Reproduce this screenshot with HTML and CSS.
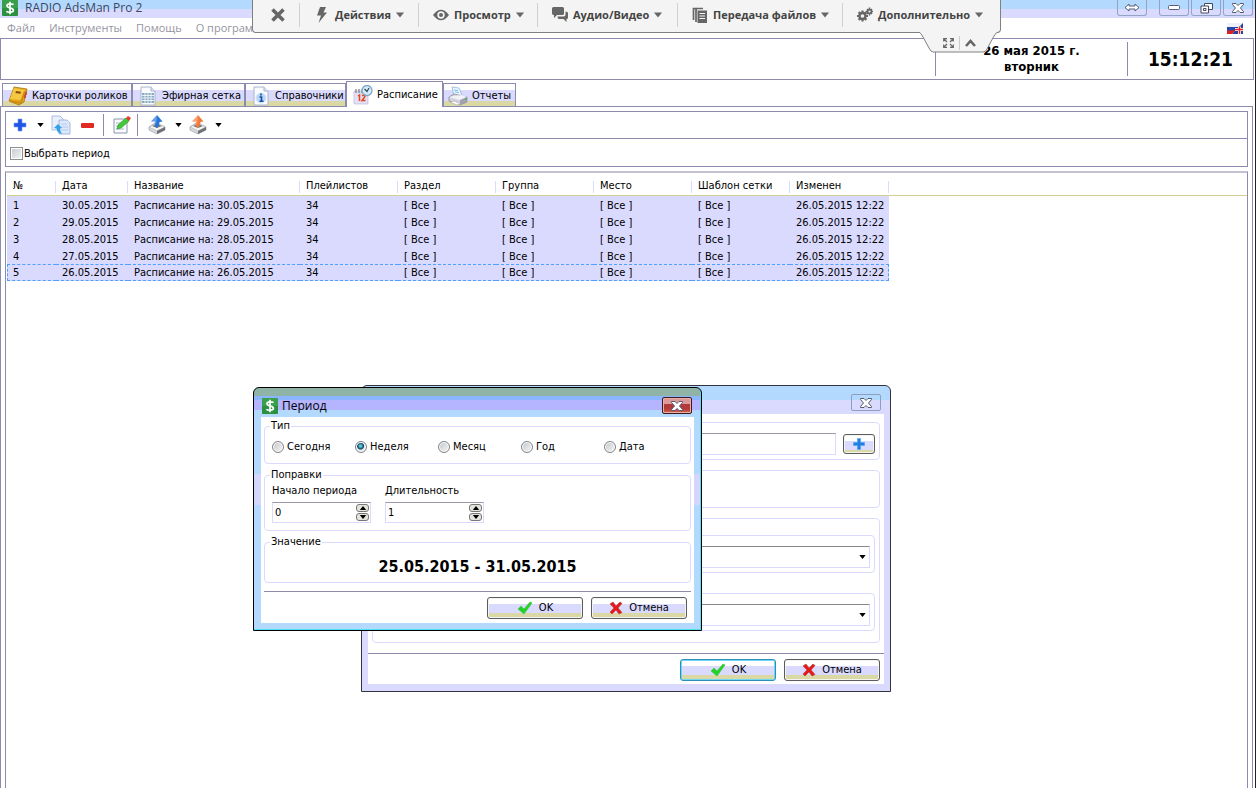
FILE: index.html
```html
<!DOCTYPE html>
<html lang="ru">
<head>
<meta charset="utf-8">
<title>RADIO AdsMan Pro 2</title>
<link rel="stylesheet" href="styles.css">
</head>
<body>
<svg class="defs" aria-hidden="true">
  <symbol id="logo" viewBox="0 0 16 16"><rect width="16" height="16" rx="1" fill="#2b9140"/><rect width="16" height="8" fill="#43a956" opacity=".6"/><path d="M11.500 4.600C10.600 3.700 5 3 5 5.700S11.400 7.700 11.400 10.200 5.600 12.700 4.400 11.200M8 1.800V14.200" fill="none" stroke="#fff" stroke-width="1.700"/></symbol>
  <symbol id="down" viewBox="0 0 8 5"><path d="M0 0h8L4 5z" fill="currentColor"/></symbol>
  <symbol id="cross" viewBox="0 0 14 10"><path d="M1.500 .5h3.500L7 2.500 9 .5h3.500v1L9.500 5l3 3.500v1H9L7 7.500 5 9.500H1.500v-1L4.500 5l-3-3.500z" fill="#fff" stroke="#555a70"/></symbol>
  <symbol id="ok" viewBox="0 0 16 14"><path d="M1 8l3-3 3 3 6-7 2 1-8 11z" fill="#1fd422" stroke="#4fc052" stroke-width=".7"/></symbol>
  <symbol id="no" viewBox="0 0 14 14"><path d="M1 3l3-2 3 4 4-4 2 1.500L9 7l4 4.500L10 13 7 9l-4 4-2-2 4-4z" fill="#e81818" stroke="#b84840" stroke-width=".7"/></symbol>
  <symbol id="plus" viewBox="0 0 14 14"><path d="M5.500 1.500h3v4h4v3h-4v4h-3v-4h-4v-3h4z" fill="#1e7fe0" stroke="#4aa3f0" stroke-width=".6"/></symbol>
  <symbol id="tray" viewBox="0 0 20 20"><path d="M2 12l6-4 10 4v3l-8 4-8-4z" fill="#d8dade" stroke="#9a9ea6" stroke-width=".7"/><path d="M2 12l8 4 8-4-8-4z" fill="#f3f3f0" stroke="#aaa" stroke-width=".6"/><path d="M10 16v3l8-4v-3z" fill="#6d7076"/><path d="M5 11l5 2 5-2-5-2z" fill="#777"/><path d="M10 0l5.500 6.500-3 .5Q13 10 10 13q-3-1.500-2-6.500L4 6.500z" fill="currentColor"/><path d="M10 0L9.500 7l-1.500 3V6.500H4z" fill="#fff" opacity=".3"/></symbol>
</svg>

<header class="titlebar">
  <svg class="i16"><use href="#logo"/></svg>
  <h1>RADIO AdsMan Pro 2</h1>
  <div class="winbtns">
    <button class="wide" aria-label="Переключить"><svg width="16" height="9" viewBox="0 0 16 9"><path d="M1 4.500L5 1v2h6V1l4 3.500L11 8V6H5v2z" fill="#fff" stroke="#5a5f78"/></svg></button>
    <button aria-label="Свернуть"><svg width="12" height="5" viewBox="0 0 12 5"><rect x=".5" y=".5" width="11" height="4" rx="1" fill="#fff" stroke="#5a5f78"/></svg></button>
    <button aria-label="Восстановить"><svg width="13" height="12" viewBox="0 0 13 12"><path d="M4.500 1.500h8v6h-8z" fill="#fff" stroke="#444a62"/><path d="M1 4h7.500v7H1z" fill="#fff" stroke="#444a62"/><path d="M3.500 6.500h2.500v2H3.500z" fill="#fff" stroke="#444a62"/></svg></button>
    <button aria-label="Закрыть"><svg width="14" height="10"><use href="#cross"/></svg></button>
  </div>
</header>

<nav class="menubar">
  <button>Файл</button><button>Инструменты</button><button>Помощь</button><button>О программе</button>
  <svg class="flag" width="16" height="11" viewBox="0 0 16 11"><path d="M0 0h16L5 11H0z" fill="#eef0fa"/><path d="M0 4h12L8 8H0z" fill="#2748a8"/><path d="M0 7.500h9L5 11H0z" fill="#e02020"/><path d="M16 0v11H5z" fill="#29449c"/><path d="M12.500 3.500v7.500M8 6.500h8" stroke="#fff" stroke-width="3"/><path d="M12.500 3.500v7.500M8 6.500h8" stroke="#e22" stroke-width="1.500"/></svg>
</nav>

<section class="clockbar">
  <p class="date">26 мая 2015 г.<br>вторник</p>
  <p class="time">15:12:21</p>
</section>

<nav class="tabs" role="tablist">
  <button role="tab" class="t1"><svg class="i20" viewBox="0 0 20 20"><path d="M6 1l13 2-3 13-5 3L1 15z" fill="#e6a817" stroke="#a87410" stroke-width=".8"/><path d="M6 2l11 2-3 10-12-1z" fill="#f5c842"/><path d="M1 14l11 2 4-11 2 .5-5 12.500-11-2z" fill="#c98b12"/><path d="M8 5l5 .8-.6 2L7.400 7z" fill="#8c4a12"/><path d="M18 6v3M17 9v3" stroke="#c33" stroke-width="1.500"/></svg>Карточки роликов</button>
  <button role="tab" class="t2"><svg class="i20" viewBox="0 0 20 20"><path d="M3 1h10l4 4v14H3z" fill="#fafbff" stroke="#a9b4cc"/><path d="M13 1v4h4" fill="#dfe8f8" stroke="#a9b4cc"/><path d="M4 7h12v10H4z" fill="#86abc4"/><path d="M4 9.500h12M4 12h12M4 14.500h12M7 7v10M10 7v10M13 7v10" stroke="#fff" stroke-width=".8"/></svg>Эфирная сетка</button>
  <button role="tab" class="t3"><svg class="i20" viewBox="0 0 20 20"><path d="M3 1h10l4 4v14H3z" fill="#fafbff" stroke="#a9b4cc"/><path d="M13 1v4h4" fill="#dfe8f8" stroke="#a9b4cc"/><circle cx="10" cy="12" r="5" fill="#b7d8f6" stroke="#d7e7f8"/><path d="M10 7.500v2M8.500 11H10.500v4M8.500 15.300h4" stroke="#184ea8" stroke-width="1.600" fill="none"/></svg>Справочники</button>
  <button role="tab" class="t4 on" aria-selected="true"><svg class="i20" viewBox="0 0 20 20"><path d="M1 6h14v13H1z" fill="#e3dff5" stroke="#c0bcdc" stroke-width=".7"/><path d="M3 4v4M6 4v4M9 4v4" stroke="#667" stroke-width="1"/><path d="M5 11l1.500-1v6M9 11q3-2 3 .5L9 15.500h3.500" stroke="#e8481c" stroke-width="1.500" fill="none"/><circle cx="14" cy="5.500" r="5" fill="#d5ecfa" stroke="#7fa8c8" stroke-width="1.300"/><path d="M11.500 4l2.500 2.500L16 3" fill="none" stroke="#345" stroke-width="1.200"/></svg>Расписание</button>
  <button role="tab" class="t5"><svg class="i20" viewBox="0 0 20 20"><path d="M4 1l7 1 3 7-8 1z" fill="#eef7ff" stroke="#8db4d8" stroke-width=".8"/><path d="M6 4l4 .5M7 6l4 .5" stroke="#78bde8"/><path d="M1 11l5-3 13 3v5l-7 3-11-4z" fill="#d5d2e0" stroke="#888794" stroke-width=".8"/><path d="M1 11l11 3 7-3-5-2-7 .8z" fill="#f3f2f8"/><path d="M12 14v5l7-3v-5z" fill="#a3a1b0"/><path d="M2 16l7 3 4-1-7-3z" fill="#fff" stroke="#999" stroke-width=".5"/><path d="M17 13h1.500" stroke="#3b3" stroke-width="1.500"/></svg>Отчеты</button>
</nav>

<main class="page">
  <div class="toolbar">
    <button class="b28" aria-label="Добавить"><svg width="14" height="14" viewBox="0 0 14 14"><path d="M5 1h4v4h4v4H9v4H5V9H1V5h4z" fill="#1f55e8" stroke="#7b9cf2" stroke-width=".6"/></svg></button>
    <button class="b12" aria-label="Варианты"><svg width="7" height="4"><use href="#down"/></svg></button>
    <button class="b30" aria-label="Копировать"><svg class="i20" viewBox="0 0 20 20"><path d="M1 1h8l3 3v11H1z" fill="#e9effc" stroke="#9fb0dc" stroke-width=".8"/><path d="M8 5h8l3 3v11H8z" fill="#dde8fb" stroke="#93aadb" stroke-width=".8"/><path d="M10 9h6M10 12h7M10 15h7" stroke="#b5c8ec"/><path d="M3 13l4-4 4 4-2 .5q0 3 2 5.500-5-1-5.500-5.500z" fill="#35a0e8"/></svg></button>
    <button class="b23" aria-label="Удалить"><svg width="13" height="5"><rect width="13" height="5" rx="1" fill="#e02a22"/></svg></button>
    <span class="sep"></span>
    <button class="b25" aria-label="Изменить"><svg class="i20" viewBox="0 0 20 20"><path d="M3 4h13v14H3z" fill="#f8faff" stroke="#8b98aa"/><path d="M5 8h5M5 11h4M5 14h8" stroke="#a9b6c8"/><path d="M6 14l1-4 8-7 3 3-8 7z" fill="#3ecb34" stroke="#238f20" stroke-width=".6"/><path d="M15 3l2-2 3 2-2 3z" fill="#e83a30"/></svg></button>
    <span class="sep"></span>
    <button class="b30 blue" aria-label="Экспорт"><svg class="i20"><use href="#tray"/></svg></button>
    <button class="b12" aria-label="Варианты экспорта"><svg width="7" height="4"><use href="#down"/></svg></button>
    <button class="b28 orange" aria-label="Импорт"><svg class="i20"><use href="#tray"/></svg></button>
    <button class="b12" aria-label="Варианты импорта"><svg width="7" height="4"><use href="#down"/></svg></button>
  </div>
  <div class="filter"><label><input type="checkbox">Выбрать период</label></div>
  <div class="grid">
    <table>
      <colgroup><col class="c1"><col class="c2"><col class="c3"><col class="c4"><col class="c4"><col class="c4"><col class="c4"><col class="c4"><col class="c5"><col></colgroup>
      <thead><tr><th>№</th><th>Дата</th><th>Название</th><th>Плейлистов</th><th>Раздел</th><th>Группа</th><th>Место</th><th>Шаблон сетки</th><th>Изменен</th><th class="rest"></th></tr></thead>
      <tbody>
        <tr><td>1</td><td>30.05.2015</td><td>Расписание на: 30.05.2015</td><td>34</td><td>[ Все ]</td><td>[ Все ]</td><td>[ Все ]</td><td>[ Все ]</td><td>26.05.2015 12:22</td></tr>
        <tr><td>2</td><td>29.05.2015</td><td>Расписание на: 29.05.2015</td><td>34</td><td>[ Все ]</td><td>[ Все ]</td><td>[ Все ]</td><td>[ Все ]</td><td>26.05.2015 12:22</td></tr>
        <tr><td>3</td><td>28.05.2015</td><td>Расписание на: 28.05.2015</td><td>34</td><td>[ Все ]</td><td>[ Все ]</td><td>[ Все ]</td><td>[ Все ]</td><td>26.05.2015 12:22</td></tr>
        <tr><td>4</td><td>27.05.2015</td><td>Расписание на: 27.05.2015</td><td>34</td><td>[ Все ]</td><td>[ Все ]</td><td>[ Все ]</td><td>[ Все ]</td><td>26.05.2015 12:22</td></tr>
        <tr class="focus"><td>5</td><td>26.05.2015</td><td>Расписание на: 26.05.2015</td><td>34</td><td>[ Все ]</td><td>[ Все ]</td><td>[ Все ]</td><td>[ Все ]</td><td>26.05.2015 12:22</td></tr>
      </tbody>
    </table>
  </div>
</main>

<section class="dialog back" role="dialog" aria-label="Параметры">
  <header><button class="close" aria-label="Закрыть"><svg width="14" height="10"><use href="#cross"/></svg></button></header>
  <div class="body">
    <div class="box row"><input type="text" class="field" aria-label="Значение периода"><button class="btn add" aria-label="Добавить период"><svg width="14" height="14"><use href="#plus"/></svg></button></div>
    <div class="box empty"></div>
    <div class="box nest">
      <div class="box"><div class="combo"><select aria-label="Первый список"><option></option></select><svg width="7" height="4"><use href="#down"/></svg></div></div>
      <div class="box"><div class="combo"><select aria-label="Второй список"><option></option></select><svg width="7" height="4"><use href="#down"/></svg></div></div>
    </div>
    <footer><button class="btn default"><svg width="16" height="14"><use href="#ok"/></svg>OK</button><button class="btn"><svg width="14" height="14"><use href="#no"/></svg>Отмена</button></footer>
  </div>
</section>

<section class="dialog front" role="dialog" aria-labelledby="dlg-title">
  <header><svg class="i16"><use href="#logo"/></svg><h2 id="dlg-title">Период</h2><button class="close red" aria-label="Закрыть"><svg width="14" height="10"><use href="#cross"/></svg></button></header>
  <div class="body">
    <fieldset class="type"><legend>Тип</legend>
      <div class="radios">
        <label><input type="radio" name="p">Сегодня</label>
        <label><input type="radio" name="p" checked>Неделя</label>
        <label><input type="radio" name="p">Месяц</label>
        <label><input type="radio" name="p">Год</label>
        <label><input type="radio" name="p">Дата</label>
      </div>
    </fieldset>
    <fieldset class="fix"><legend>Поправки</legend>
      <div class="spins">
        <div><label for="s1">Начало периода</label>
          <div class="spin"><input id="s1" type="text" value="0"><div class="ud"><button aria-label="Больше"><svg class="up" width="8" height="4"><use href="#down"/></svg></button><button aria-label="Меньше"><svg width="8" height="4"><use href="#down"/></svg></button></div></div></div>
        <div><label for="s2">Длительность</label>
          <div class="spin"><input id="s2" type="text" value="1"><div class="ud"><button aria-label="Больше"><svg class="up" width="8" height="4"><use href="#down"/></svg></button><button aria-label="Меньше"><svg width="8" height="4"><use href="#down"/></svg></button></div></div></div>
      </div>
    </fieldset>
    <fieldset class="val"><legend>Значение</legend><output>25.05.2015 - 31.05.2015</output></fieldset>
    <footer><button class="btn"><svg width="16" height="14"><use href="#ok"/></svg>OK</button><button class="btn"><svg width="14" height="14"><use href="#no"/></svg>Отмена</button></footer>
  </div>
</section>

<div class="remote">
  <div class="strip">
    <button aria-label="Закрыть сеанс"><svg width="14" height="14" viewBox="0 0 14 14"><path d="M1.500 1.500l11 11M12.500 1.500l-11 11" stroke="#666" stroke-width="3.600"/></svg></button>
    <button><svg class="i16" viewBox="0 0 16 16"><path d="M6 0h6L9.500 5.500H13L4.500 16 7 8.500H3z" fill="#666"/></svg>Действия<svg class="dd"><use href="#down"/></svg></button>
    <button><svg class="i16" viewBox="0 0 16 16"><path d="M0 8Q8-2.500 16 8 8 18.500 0 8z" fill="#666"/><circle cx="8" cy="8" r="3.700" fill="#f4f4f4"/><circle cx="8" cy="8" r="2" fill="#666"/></svg>Просмотр<svg class="dd"><use href="#down"/></svg></button>
    <button><svg class="i16" viewBox="0 0 16 16"><path d="M1.500 0h9Q12 0 12 1.500v5Q12 8 10.500 8H5l-3 3V8Q0 8 0 6.500v-5Q0 0 1.500 0z" fill="#666"/><path d="M13.500 4.500Q16 4.500 16 6v4.500q0 1.500-1.500 1.500V15l-3-3H7q-1.500 0-1.500-2.500h6q2 0 2-2z" fill="#666"/></svg>Аудио/Видео<svg class="dd"><use href="#down"/></svg></button>
    <button><svg class="i16" viewBox="0 0 16 16"><path d="M1.500 13V1.500H11M4 15V3h1" fill="none" stroke="#666" stroke-width="1.700"/><path d="M5.500 3.500H15V16H5.500z" fill="#666"/><path d="M7.500 6.500h5.500M7.500 9h5.500M7.500 11.500h5.500" stroke="#f4f4f4"/></svg>Передача файлов<svg class="dd"><use href="#down"/></svg></button>
    <button><svg class="i16" viewBox="0 0 16 16"><circle cx="5.500" cy="9" r="3" fill="none" stroke="#666" stroke-width="2.400"/><path d="M5.500 3.500v2.500M5.500 12v2.500M0 9h2.500M8.500 9H11M1.600 5.100l2 2M7.400 10.900l2 2M9.400 5.100l-2 2M3.600 10.900l-2 2" stroke="#666" stroke-width="2.200"/><circle cx="12.500" cy="4.500" r="1.900" fill="none" stroke="#666" stroke-width="1.600"/><path d="M12.500 .5v2M12.500 6.500v2M8.800 4.500h2M14.200 4.500H16M10 2l1.200 1.200M13.800 5.800L15 7M15 2l-1.200 1.200M11.200 5.800L10 7" stroke="#666" stroke-width="1.500"/></svg>Дополнительно<svg class="dd"><use href="#down"/></svg></button>
  </div>
  <div class="handle">
    <svg class="shape" width="80" height="21" viewBox="0 0 80 21"><path d="M0 0Q2 1 4 5l6 11q2 4 4 4h50q3 0 4-3l7-13q2-4 5-4" fill="#f4f4f4" stroke="#808080"/></svg>
    <button aria-label="Во весь экран"><svg width="11" height="10" viewBox="0 0 11 10"><path d="M.7 3.500V.7H4M7 .7h3.300v2.800M10.300 6.500v2.800H7M4 9.300H.7V6.500M1 1l3 3M10 1L7 4M10 9L7 6M1 9l3-3" fill="none" stroke="#666" stroke-width="1.200"/></svg></button>
    <button aria-label="Свернуть панель"><svg width="11" height="8" viewBox="0 0 11 8"><path d="M1 7l4.500-5L10 7" fill="none" stroke="#666" stroke-width="2.600"/></svg></button>
  </div>
</div>
</body>
</html>
```

FILE: styles.css
```css
* { box-sizing: border-box; }
:root {
  --line: #8d8bad;
  --soft: #c2c2d2;
  --lav: #dadaff;
  --sky: #b3d9ff;
  --sand: #dad9a6;
}
body {
  margin: 0;
  min-height: 100vh;
  display: flex;
  flex-direction: column;
  position: relative;
  overflow: hidden;
  background: #fff;
  border-right: 1px solid #222;
  color: #000;
  font: 11px/14px "DejaVu Sans Condensed", "DejaVu Sans", sans-serif;
}
button, input, select { font: inherit; color: inherit; margin: 0; padding: 0; }
button { background: none; border: 0; white-space: nowrap; }
h1, h2, p { margin: 0; font-weight: normal; }
svg { display: block; flex: none; }
.defs { position: absolute; width: 0; height: 0; }
.i16 { width: 16px; height: 16px; }
.i20 { width: 20px; height: 20px; }

.titlebar {
  display: flex;
  height: 18px;
  padding-left: 2px;
  background: linear-gradient(var(--sky) 9px, var(--lav) 9px);
}
.titlebar h1 {
  flex: 1;
  margin-left: 7px;
  font: 12px/16px "Open Sans", "Noto Sans", sans-serif;
  color: #3c4660;
}
.winbtns { display: flex; gap: 2px; padding-right: 2px; }
.winbtns button {
  display: grid;
  place-items: center;
  width: 30px;
  height: 16px;
  border: 1px solid #93a3c6;
  border-top: 0;
  border-radius: 0 0 3px 3px;
}
.winbtns .wide { margin-right: 10px; }

.menubar {
  display: flex;
  align-items: center;
  gap: 14px;
  height: 20px;
  padding: 0 12px 0 7px;
  font: 11px/18px "Open Sans", "Noto Sans", sans-serif;
  color: #96959f;
}
.flag { margin-left: auto; }

.clockbar {
  display: flex;
  justify-content: flex-end;
  align-items: center;
  height: 42px;
  margin-right: 1px;
  border: 1px solid var(--line);
  text-align: center;
}
.clockbar p { display: grid; place-content: center; height: 34px; border-left: 1px solid var(--line); font-weight: bold; }
.date { width: 192px; font-size: 13px; line-height: 16px; }
.time { width: 126px; font-size: 19px; line-height: 24px; }

.tabs {
  display: flex;
  align-items: flex-end;
  height: 26px;
  padding-left: 2px;
}
.tabs button {
  display: flex;
  align-items: center;
  gap: 4px;
  height: 23px;
  padding: 2px 0 0 5px;
  border: 1px solid var(--line);
  border-bottom: 0;
  background: linear-gradient(#fff 6px, var(--lav) 6px, var(--lav) 17px, var(--sand) 17px);
}
.tabs .t1 { width: 130px; }
.tabs .t2 { width: 113px; }
.tabs .t3 { width: 101px; }
.tabs .t4 { width: 97px; }
.tabs .t5 { width: 73px; padding-left: 4px; }
.tabs .on {
  height: 26px;
  margin-bottom: -1px;
  padding: 0 0 0 6px;
  background: #fff;
  z-index: 1;
}

.page {
  flex: 1;
  display: flex;
  flex-direction: column;
  margin-right: 2px;
  padding: 4px 4px 0;
  border: 1px solid var(--line);
  border-bottom: 0;
}
.toolbar {
  display: flex;
  align-items: center;
  height: 28px;
  border: 1px solid var(--line);
}
.toolbar button { display: grid; place-items: center; }
.b12 { width: 12px; }
.b23 { width: 23px; }
.b25 { width: 25px; }
.b28 { width: 28px; }
.b30 { width: 30px; }
.toolbar .blue { color: #2676d9; }
.toolbar .orange { color: #f47a3a; }
.sep { width: 1px; height: 22px; margin: 0 4px; background: var(--line); }
.filter {
  display: flex;
  align-items: center;
  height: 28px;
  padding: 2px 0 0 4px;
  border: solid var(--line);
  border-width: 0 1px 1px;
}
.filter label { display: flex; align-items: center; gap: 1px; }
.filter input {
  appearance: none;
  width: 13px;
  height: 13px;
  border: 1px solid #8e8f8f;
  box-shadow: inset 0 0 0 1px #fff;
  background: linear-gradient(135deg, #c5cad0, #f4f5f6);
}
.grid {
  flex: 1;
  margin-top: 4px;
  padding-left: 1px;
  border: solid var(--line);
  border-width: 2px 1px 0;
  border-top-color: var(--soft);
}
table { width: 100%; table-layout: fixed; border-collapse: separate; border-spacing: 0; }
.c1 { width: 49px; }
.c2 { width: 72px; }
.c3 { width: 172px; }
.c4 { width: 98px; }
.c5 { width: 99px; }
th, td { padding: 0 0 0 6px; text-align: left; font-weight: normal; white-space: nowrap; }
th {
  height: 23px;
  padding-top: 3px;
  border-bottom: 1px solid #cfcf8e;
  background: linear-gradient(var(--lav), var(--lav)) right 0 bottom 2px / 1px 12px no-repeat;
}
.rest { background: none; }
td { height: 17px; padding-top: 2px; line-height: 15px; background: var(--lav); }
.focus td { padding-top: 0; border: dashed #4da0ff; border-width: 1px 0; }
.focus td:first-child { border-left-width: 1px; padding-left: 5px; }
.focus td:last-child { border-right-width: 1px; }

.dialog { position: absolute; border: 1px solid #33333f; border-radius: 6px 6px 0 0; }
.dialog header { display: flex; align-items: center; }
.dialog .body { background: #fff; }
.close {
  display: grid;
  place-items: center;
  width: 30px;
  height: 17px;
  margin-left: auto;
  border: 1px solid #8d9ec0;
  border-radius: 2px;
}
.close.red {
  border-color: #3a1a1a;
  background: linear-gradient(#d99 6px, #b23a3a 6px, #b23a3a 11px, #dd6a4c);
  box-shadow: inset 0 0 0 1px #e8b0a8;
}
.dialog footer {
  display: flex;
  justify-content: flex-end;
  gap: 8px;
  padding-top: 5px;
  border-top: 1px solid var(--line);
}
.btn {
  display: flex;
  align-items: center;
  justify-content: center;
  gap: 6px;
  width: 96px;
  height: 22px;
  border: 1px solid #5c5c60;
  border-radius: 3px;
  background: linear-gradient(#fff 6px, var(--lav) 6px, var(--lav) 15px, var(--sand) 15px);
  box-shadow: inset 0 0 0 1px #f4f4ee;
}
.btn.default { border-color: #2b8fb8; box-shadow: inset 0 0 0 1px #6fd8f4; }
.box { border: 1px solid var(--lav); border-radius: 4px; }

.back {
  left: 361px;
  top: 385px;
  width: 530px;
  padding: 0 6px 7px;
  background: linear-gradient(var(--sky) 14px, var(--lav) 14px);
}
.back header { height: 28px; padding: 5px 3px 0 0; }
.back .body { display: flex; flex-direction: column; gap: 10px; padding: 8px 4px 3px; }
.back footer { margin: 0 -4px; padding-right: 4px; }
.row { display: flex; align-items: center; gap: 7px; height: 38px; padding: 6px 4px 0; }
.field { flex: 1; min-width: 0; height: 22px; border: 1px solid var(--lav); border-top-color: #99a; background: #fff; }
.btn.add { width: 32px; height: 20px; }
.empty { height: 38px; }
.nest { display: flex; flex-direction: column; gap: 20px; height: 125px; padding: 16px 4px 0; }
.nest .box { height: 38px; padding: 10px 4px 0; }
.combo { position: relative; }
.combo select {
  appearance: none;
  display: block;
  width: 100%;
  height: 22px;
  border: 1px solid var(--lav);
  border-top-color: #888;
  background: #fff;
}
.combo svg { position: absolute; right: 4px; top: 9px; pointer-events: none; }

.front {
  left: 253px;
  top: 387px;
  width: 449px;
  padding: 0 7px 7px;
  border-color: #000;
  background: linear-gradient(#8fb3a6 8px, #8cb4ff 8px, #8cb4ff 12px, #b4b4ff 12px, #b4b4ff 22px, var(--sky) 22px, var(--sky) 86px, #d4d6fb 86px, #d4d6fb 117px, var(--sky) 117px);
  box-shadow: inset -1px -1px 0 #4fe0f4;
}
.front header { height: 29px; padding: 6px 2px 0 1px; }
.front h2 { margin-left: 4px; font: 12px/16px "Open Sans", "Noto Sans", sans-serif; }
.front .body { display: flex; flex-direction: column; gap: 4px; padding: 2px 3px 4px; }
fieldset { min-width: 0; margin: 0; padding: 0; border: 1px solid var(--lav); border-radius: 4px; }
legend { margin-left: 5px; padding: 0 1px; line-height: 14px; }
.type { height: 45px; }
.fix { height: 63px; }
.val { height: 48px; }
.radios { display: grid; grid-template-columns: repeat(5, 83px); padding: 7px 0 0 7px; }
.radios label { display: flex; align-items: center; gap: 3px; }
.radios input {
  appearance: none;
  width: 12px;
  height: 12px;
  border: 1px solid #808488;
  border-radius: 50%;
  box-shadow: inset 0 0 0 1px #fff;
  background: linear-gradient(135deg, #c2c6ca, #f6f6f6);
}
.radios input:checked { background: radial-gradient(circle at 45% 40%, #5cc4dc 1px, #12405c 3px, #dfe6ea 4px); }
.spins { display: flex; gap: 14px; padding: 2px 7px 0; }
.spins > div { width: 99px; }
.spins label { white-space: nowrap; }
.spin { display: flex; align-items: center; height: 21px; margin-top: 4px; padding: 0 1px 0 2px; border: 1px solid var(--lav); border-top-color: #99a; }
.spin input { flex: 1; min-width: 0; border: 0; outline: 0; background: none; }
.ud { display: grid; gap: 1px; }
.ud button { display: grid; place-items: center; width: 13px; height: 8px; border: 1px solid #777; border-radius: 3px; background: #e4e4dc; }
.up { transform: rotate(180deg); }
.val output { display: block; margin-top: 8px; text-align: center; font-weight: bold; font-size: 16px; line-height: 20px; }
.front footer { margin-top: 4px; padding-right: 4px; }

.remote { position: absolute; left: 252px; top: 0; width: 749px; font: bold 11px/18px "Open Sans", "Noto Sans", sans-serif; color: #444; }
.strip {
  display: grid;
  grid-template-columns: 46px 119px 119px 140px 165px 1fr;
  height: 33px;
  padding: 3px 0 5px;
  background: #f4f4f4;
  border: 1px solid #808080;
  border-top: 0;
  border-radius: 0 0 4px 4px;
}
.strip button { display: flex; align-items: center; gap: 5px; padding-left: 14px; border-left: 1px solid #d0d0d0; }
.strip button:first-child { border: 0; padding-left: 18px; }
.dd { width: 8px; height: 6px; color: #666; }
.handle { position: absolute; right: 2px; top: 32px; width: 80px; height: 21px; display: flex; justify-content: center; align-items: center; }
.handle .shape { position: absolute; left: 0; top: 0; }
.handle button { position: relative; padding: 3px 5px; }
.handle button + button { border-left: 1px solid #ccc; }
```
